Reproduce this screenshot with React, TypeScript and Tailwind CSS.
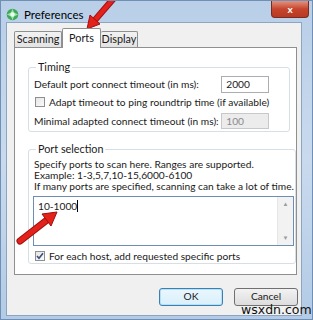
import React from 'react';

const font = { fontFamily: 'Lato, "Noto Sans", sans-serif' };

const Check = ({ checked }: { checked?: boolean }) => (
    <span className="w-[10px] h-[10px] border border-[#8f8f8f] bg-gradient-to-br from-[#e6e6e6] to-[#fafafa] flex items-center justify-center shrink-0">
        {checked && (
            <svg width="8" height="8" viewBox="0 0 8 8">
                <path d="M1 4 L3 6.3 L7 1.2" fill="none" stroke="#3a4f7a" strokeWidth="1.6" />
            </svg>
        )}
    </span>
);

const App = () => {
    return (
        <div
            className="relative w-[313px] h-[320px] overflow-hidden bg-gradient-to-b from-[#b9cfe8] via-[#c9daee] to-[#b3cbe6] flex flex-col text-[10.2px] text-[#1a1a1a] border border-[#6f8fb5] whitespace-nowrap"
            style={font}
        >
            {/* Title bar */}
            <div className="h-[21px] flex items-start shrink-0">
                <div className="flex items-center gap-[5px] pl-[5px] pt-[5px]">
                    <svg width="13" height="13" viewBox="0 0 13 13">
                        <circle cx="6.5" cy="6.5" r="5.8" fill="#3fa85a" />
                        <path d="M6.5 0.8 L8 4.5 L12.2 6.5 L8 8.5 L6.5 12.2 L5 8.5 L0.8 6.5 L5 4.5 Z" fill="#9be0a8" />
                        <circle cx="6.5" cy="6.5" r="2.2" fill="#e8fff0" />
                    </svg>
                    <span className="text-[11.5px] text-black">Preferences</span>
                </div>
                <div className="ml-auto mr-[3px] w-[38px] h-[17px] rounded-b-[4px] bg-gradient-to-b from-[#e3917f] via-[#c5442c] to-[#b83a24] border border-[#7d2a1e] border-t-0 flex items-center justify-center text-white text-[10px] font-bold">
                    x
                </div>
            </div>

            {/* Client area */}
            <div className="flex-1 ml-[5px] mr-[10px] mb-[3px] bg-[#f0f0f0] border border-[#8ea5c0] flex flex-col pt-[4px]">
                {/* Tabs */}
                <div className="flex items-end pl-[7px] h-[20px] text-[10.8px]">
                    <div className="h-[16px] w-[48px] border border-[#8e8f8f] border-b-0 bg-gradient-to-b from-[#f2f2f2] to-[#e3e3e3] flex items-center justify-center rounded-t-[2px]">
                        Scanning
                    </div>
                    <div className="h-[20px] w-[39px] -mb-px relative z-10 border border-[#8e8f8f] border-b-0 bg-white flex items-center justify-center rounded-t-[2px]">
                        Ports
                    </div>
                    <div className="h-[16px] w-[37px] border border-[#8e8f8f] border-b-0 border-l-0 bg-gradient-to-b from-[#f2f2f2] to-[#e3e3e3] flex items-center justify-center rounded-t-[2px]">
                        Display
                    </div>
                </div>

                {/* Panel */}
                <div className="ml-[7px] mr-[4px] h-[228px] border border-[#8e8f8f] bg-white flex flex-col pl-[13px] pr-[17px] pt-[11px] gap-[9px]">
                    <fieldset className="border border-[#d5dfe5] rounded-[3px] pl-[5px] pr-[20px] h-[73px]">
                        <legend className="ml-[2px] px-[2px] text-[10.8px]">Timing</legend>
                        <div className="flex items-center justify-between h-[16px] mt-[1px]">
                            <span>Default port connect timeout (in ms):</span>
                            <div className="w-[48px] h-[17px] border border-[#abadb3] bg-white px-[4px] flex items-center">2000</div>
                        </div>
                        <div className="flex items-center gap-[4px] h-[16px] mt-[2px] pl-[1px]">
                            <Check />
                            <span>Adapt timeout to ping roundtrip time (if available)</span>
                        </div>
                        <div className="flex items-center justify-between h-[16px] mt-[3px]">
                            <span>Minimal adapted connect timeout (in ms):</span>
                            <div className="w-[48px] h-[16px] border border-[#c8c8c8] bg-[#ececec] text-[#8a8a8a] px-[4px] flex items-center">100</div>
                        </div>
                    </fieldset>

                    <fieldset className="border border-[#d5dfe5] rounded-[3px] pl-[4px] pr-[1px] h-[123px]">
                        <legend className="ml-[3px] px-[2px] text-[10.8px]">Port selection</legend>
                        <div className="leading-[11px] mt-[2px] pl-[1px]">
                            <div>Specify ports to scan here. Ranges are supported.</div>
                            <div>Example: 1-3,5,7,10-15,6000-6100</div>
                            <div>If many ports are specified, scanning can take a lot of time.</div>
                        </div>
                        <div className="mt-[4px] h-[50px] border border-[#6e8cb4] flex bg-white">
                            <div className="flex-1 px-[4px] pt-[2px] flex items-start">
                                <span>10-1000</span>
                                <span className="w-px h-[12px] bg-black mt-[1px]" />
                            </div>
                            <div className="w-[16px] bg-[#f2f2f2] border-l border-[#e6e6e6] flex flex-col justify-between items-center py-[4px] text-[#9a9a9a] text-[6px] leading-none">
                                <span>▲</span>
                                <span>▼</span>
                            </div>
                        </div>
                        <div className="flex items-center gap-[4px] h-[16px] mt-[2px] pl-[2px]">
                            <Check checked />
                            <span>For each host, add requested specific ports</span>
                        </div>
                    </fieldset>
                </div>

                {/* Buttons */}
                <div className="flex justify-end gap-[11px] pr-[3px] mt-[13px]">
                    <div className="w-[64px] h-[18px] rounded-[3px] border border-[#3c7fb1] bg-gradient-to-b from-[#eaf6fd] to-[#d9f0fc] flex items-center justify-center shadow-[inset_0_0_0_1px_#b4e0f8]">
                        OK
                    </div>
                    <div className="w-[64px] h-[18px] rounded-[3px] border border-[#707070] bg-gradient-to-b from-[#f2f2f2] to-[#dddddd] flex items-center justify-center">
                        Cancel
                    </div>
                </div>
            </div>

            {/* Red annotation arrows */}
            <svg className="absolute inset-0 pointer-events-none" width="313" height="320">
                <line x1="113" y1="-3" x2="94" y2="19" stroke="#9e0f0f" strokeWidth="6.5" strokeLinecap="round" />
                <line x1="113" y1="-3" x2="94" y2="19" stroke="#e3221b" strokeWidth="4.5" strokeLinecap="round" />
                <polygon points="86,28 99,23 89,14" fill="#e3221b" stroke="#9e0f0f" strokeWidth="1" strokeLinejoin="round" />
                <line x1="19" y1="240" x2="46" y2="219" stroke="#9e0f0f" strokeWidth="7" strokeLinecap="round" />
                <line x1="19" y1="240" x2="46" y2="219" stroke="#e3221b" strokeWidth="5" strokeLinecap="round" />
                <polygon points="56,211 50,225 41,213" fill="#e3221b" stroke="#9e0f0f" strokeWidth="1" strokeLinejoin="round" />
            </svg>

            <div className="absolute left-[240px] top-[303px] text-[12.5px] text-[#111] leading-none" style={{ fontFamily: '"DejaVu Sans", sans-serif' }}>
                wsxdn.com
            </div>
        </div>
    );
};

export default App;
